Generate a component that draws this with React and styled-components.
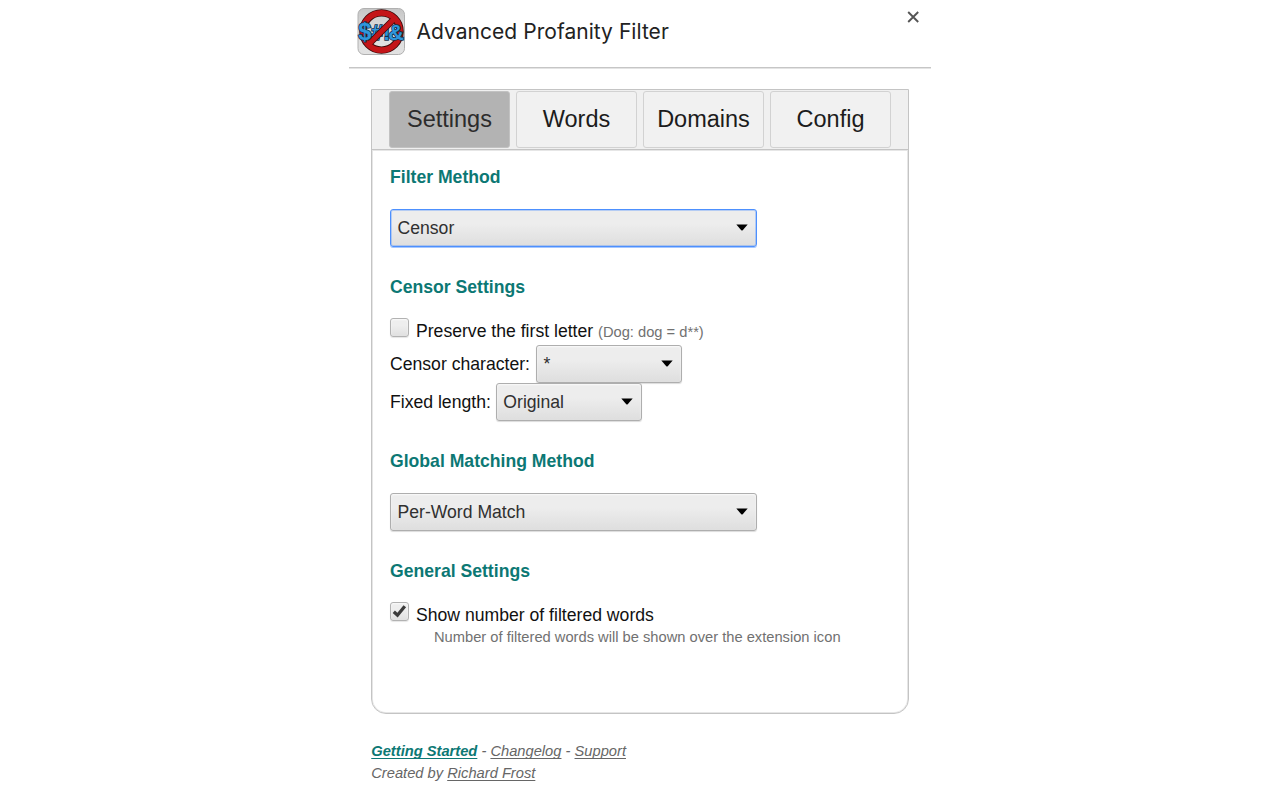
import React from "react";
import styled, { createGlobalStyle, css } from "styled-components";

const Global = createGlobalStyle`
  * { box-sizing: border-box; }
  body { margin: 0; background: #fff; font-family: "Liberation Sans", Arial, sans-serif; color: #1a1a1a; }
`;

const Popup = styled.main`
  width: 582px;
  height: 800px;
  margin: 0 0 0 349px;
  overflow: hidden;
`;

const Header = styled.header`
  display: flex;
  height: 68px;
  padding: 8px 12px 0 8px;
  border-bottom: 1px solid #c6c6c6;
  box-shadow: 0 1px 0 #e4e4e4;
`;

const Title = styled.h1`
  flex: 1;
  margin: 0 0 0 11.5px;
  font: 400 21px/48px Inter, sans-serif;
  letter-spacing: 0.04px;
  color: #222;
  white-space: nowrap;
`;

const CloseIcon = styled.svg`
  width: 12px;
  height: 12px;
  margin: 3px 0 0;
`;

const Panel = styled.section`
  width: 538px;
  height: 625px;
  margin: 21px 0 0 22px;
  border: 1px solid #c4c4c4;
  border-radius: 0 0 15px 15px;
  box-shadow: inset 0 0 0 1px #e6e6e6;
`;

const Tabs = styled.nav`
  display: flex;
  gap: 6px;
  height: 60px;
  padding: 1px 17px;
  background: #f0f0f0;
  border-bottom: 1px solid #c4c4c4;
  box-shadow: 0 1px 0 #e6e6e6;
`;

const Tab = styled.button`
  width: 121px;
  height: 57px;
  padding: 0 0 1px;
  border: 1px solid ${(p) => (p.$active ? "#c2c2c2" : "#d2d2d2")};
  border-radius: 3px;
  background: ${(p) => (p.$active ? "#b3b3b3" : "#f1f1f1")};
  font: 23.5px/54px "Liberation Sans", Arial, sans-serif;
  color: ${(p) => (p.$active ? "#2c2c2c" : "#1c1c1c")};
`;

const Content = styled.div`
  padding: 15px 18px 0;
`;

const Heading = styled.h2`
  margin: 0 0 20px;
  font-size: 17.63px;
  line-height: 24px;
  font-weight: 700;
  color: #0c7874;
`;

const Row = styled.div`
  display: flex;
  align-items: flex-start;
  height: ${(p) => p.$height}px;
  margin-bottom: ${(p) => p.$after || 0}px;
  font-size: 17.63px;
  line-height: 38px;
  color: #111;
  white-space: nowrap;
`;

const Select = styled.button`
  display: flex;
  justify-content: space-between;
  align-items: flex-start;
  width: ${(p) => p.$width}px;
  height: 38px;
  margin-left: ${(p) => p.$indent || 0}px;
  padding: 0 8.5px 0 6.5px;
  border: 1px solid #aeaeae;
  border-radius: 3px;
  background: linear-gradient(#ededed 38%, #dedede);
  box-shadow: 0 1px 1px rgba(0, 0, 0, 0.14), inset 0 1px 2px rgba(255, 255, 255, 0.75);
  font: 17.63px/37px "Liberation Sans", Arial, sans-serif;
  color: #303030;
  ${(p) =>
    p.$focused &&
    css`
      border-color: #4d90fe;
      box-shadow: 0 1px 0 rgba(77, 144, 254, 0.5), inset 0 0 0 1px rgba(77, 144, 254, 0.35);
    `}
`;

const Arrow = styled.svg`
  width: 12px;
  height: 7px;
  margin-top: 14px;
`;

const Check = styled.span`
  display: flex;
  width: 19px;
  height: 19px;
  margin: -1px 7px 0 0;
  border: 1px solid #b2b2b2;
  border-radius: 3px;
  background: linear-gradient(#eeeeee 38%, #e0e0e0);
  box-shadow: 0 1px 1px rgba(0, 0, 0, 0.1), inset 0 1px 2px rgba(255, 255, 255, 0.75);
`;

const CheckLabel = styled.span`
  line-height: 24px;
`;

const Note = styled.small`
  font-size: 14.69px;
  color: #717171;
`;

const Hint = styled.p`
  margin: 0 0 0 44px;
  font-size: 14.69px;
  line-height: 18px;
  color: #717171;
  white-space: nowrap;
`;

const Footer = styled.footer`
  margin: 26px 0 0 22.25px;
  font-size: 14.69px;
  line-height: 22px;
  font-style: italic;
  color: #666;
`;

const FootLink = styled.a`
  color: ${(p) => (p.$primary ? "#0c7874" : "#666")};
  font-weight: ${(p) => (p.$primary ? 700 : 400)};
  text-decoration: underline;
  text-decoration-thickness: 1px;
  text-decoration-skip-ink: none;
  text-underline-offset: 2px;
`;

const Symbols = styled.g`
  font-family: "Liberation Sans", Arial, sans-serif;
  font-weight: 700;
  fill: #2f96dc;
  stroke: #12304c;
  stroke-width: 1.6px;
  paint-order: stroke;
`;

function Logo() {
  return (
    <svg width="48" height="48" viewBox="0 0 48 48">
      <defs>
        <linearGradient id="plate" x1="0" y1="0" x2="0" y2="1">
          <stop offset="0" stopColor="#c6c6c6" />
          <stop offset="0.5" stopColor="#dedede" />
          <stop offset="1" stopColor="#e2e2e2" />
        </linearGradient>
      </defs>
      <rect x="1" y="0.5" width="46.5" height="46" rx="6" fill="url(#plate)" stroke="#b0b0b0" />
      <Symbols>
        <text x="14" y="31.5" fontSize="21.5">#</text>
        <text x="26" y="31.5" fontSize="21.5">!</text>
      </Symbols>
      <circle cx="24.5" cy="23.5" r="18.6" fill="none" stroke="#3b0808" strokeWidth="7.4" />
      <path d="M11.5 36.5 37.5 10.5" stroke="#3b0808" strokeWidth="6.6" />
      <circle cx="24.5" cy="23.5" r="18.6" fill="none" stroke="#c41518" strokeWidth="5.6" />
      <path d="M11 37 38 10" stroke="#c41518" strokeWidth="5" />
      <Symbols>
        <text x="1.2" y="31.5" fontSize="23.5">$</text>
        <text x="31.2" y="31.5" fontSize="21.5">&amp;</text>
      </Symbols>
    </svg>
  );
}

function Dropdown({ children, width, indent, focused }) {
  return (
    <Select $width={width} $indent={indent} $focused={focused}>
      <span>{children}</span>
      <Arrow viewBox="0 0 12 7">
        <path d="M0.3 0.5H11.7L6.7 6.2Q6 6.9 5.3 6.2Z" fill="#000" />
      </Arrow>
    </Select>
  );
}

export default function App() {
  return (
    <>
      <Global />
      <Popup>
        <Header>
          <Logo />
          <Title>Advanced Profanity Filter</Title>
          <CloseIcon viewBox="0 0 12 12">
            <path d="M1.2 1 11.2 11M11.2 1 1.2 11" stroke="#555" strokeWidth="1.9" />
          </CloseIcon>
        </Header>
        <Panel>
          <Tabs>
            <Tab $active>Settings</Tab>
            <Tab>Words</Tab>
            <Tab>Domains</Tab>
            <Tab>Config</Tab>
          </Tabs>
          <Content>
            <Heading>Filter Method</Heading>
            <Row $height={39} $after={27}>
              <Dropdown width={367.4} focused>Censor</Dropdown>
            </Row>
            <Heading>Censor Settings</Heading>
            <Row $height={26}>
              <Check />
              <CheckLabel>
                Preserve the first letter <Note>(Dog: dog = d**)</Note>
              </CheckLabel>
            </Row>
            <Row $height={38}>
              Censor character:
              <Dropdown width={146.5} indent={6}>*</Dropdown>
            </Row>
            <Row $height={38} $after={28}>
              Fixed length:
              <Dropdown width={146.5} indent={5}>Original</Dropdown>
            </Row>
            <Heading>Global Matching Method</Heading>
            <Row $height={39} $after={27}>
              <Dropdown width={367.4}>Per-Word Match</Dropdown>
            </Row>
            <Heading>General Settings</Heading>
            <Row $height={25}>
              <Check>
                <svg width="17" height="17" viewBox="0 0 17 17">
                  <path d="M2.8 8.7 6.5 12.2 13.8 3.2" fill="none" stroke="#3c3c3c" strokeWidth="3.3" />
                </svg>
              </Check>
              <CheckLabel>Show number of filtered words</CheckLabel>
            </Row>
            <Hint>Number of filtered words will be shown over the extension icon</Hint>
          </Content>
        </Panel>
        <Footer>
          <div>
            <FootLink $primary>Getting Started</FootLink> - <FootLink>Changelog</FootLink> - <FootLink>Support</FootLink>
          </div>
          <div>
            Created by <FootLink>Richard Frost</FootLink>
          </div>
        </Footer>
      </Popup>
    </>
  );
}
